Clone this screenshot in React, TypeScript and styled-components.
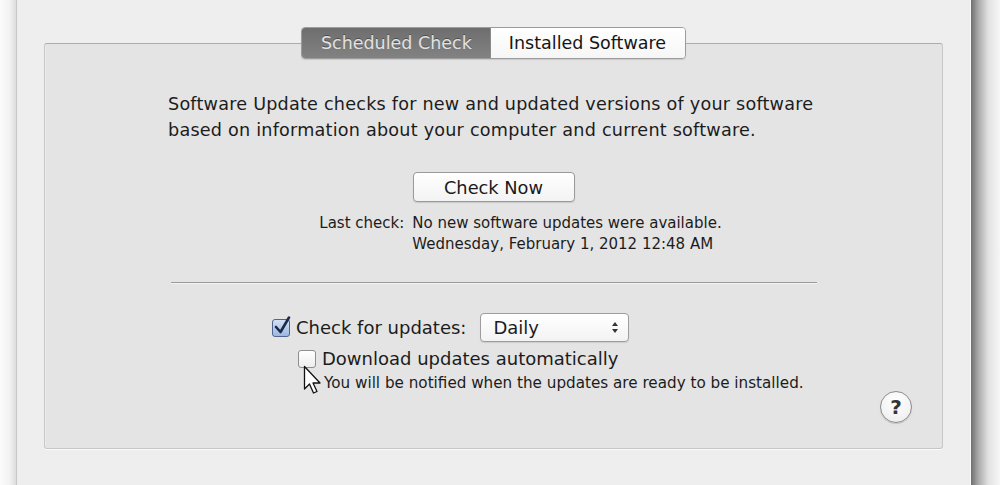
import React from "react";
import styled, { createGlobalStyle } from "styled-components";

const GlobalStyle = createGlobalStyle`
  html, body {
    margin: 0;
    padding: 0;
    background: #eeeeee;
  }
  body {
    font-family: "DejaVu Sans", "Liberation Sans", sans-serif;
    color: #1c1c1c;
  }
`;

const Screen = styled.div`
  display: flex;
  width: 1000px;
  height: 485px;
  overflow: hidden;
`;

const LeftEdge = styled.div`
  width: 16px;
  flex-shrink: 0;
  background: linear-gradient(to right, #fbfbfb, #f2f2f2 60%, #dcdcdc);
  border-right: 1px solid #c8c8c8;
`;

const RightShadow = styled.div`
  width: 29px;
  flex-shrink: 0;
  border-left: 1px solid #fafafa;
  background: linear-gradient(to right, #6f6f6f, #a9a9a9 25%, #e2e2e2 60%, #f6f6f6);
`;

const Window = styled.div`
  flex: 1;
  background: #eeeeee;
  padding: 43px 27px 0 27px;
`;

const Panel = styled.section`
  height: 406px;
  box-sizing: border-box;
  background: #e4e4e4;
  border: 1px solid #c6c6c6;
  border-top-color: #acacac;
  border-radius: 3px;
  box-shadow: 0 1px 0 #fafafa, inset 1px 0 0 #ececec;
  display: flex;
  flex-direction: column;
  align-items: center;
  position: relative;
`;

const TabBar = styled.div`
  display: flex;
  margin-top: -17px;
  height: 30px;
  border: 1px solid #9c9c9c;
  border-radius: 4px;
  overflow: hidden;
  box-shadow: 0 1px 1px rgba(0, 0, 0, 0.12);
`;

const Tab = styled.div<{ $active?: boolean }>`
  display: flex;
  align-items: center;
  padding: 0 ${(p) => (p.$active ? "18px" : "19px")} 0 ${(p) => (p.$active ? "19px" : "18px")};
  font-size: 17.5px;
  color: ${(p) => (p.$active ? "#e2e2e2" : "#151515")};
  text-shadow: ${(p) => (p.$active ? "0 -1px 0 rgba(0,0,0,0.35)" : "none")};
  background: ${(p) =>
    p.$active
      ? "linear-gradient(to bottom, #6e6e6e, #828282)"
      : "linear-gradient(to bottom, #ffffff, #f6f6f6)"};
  & + & {
    border-left: 1px solid #8a8a8a;
  }
`;

const Description = styled.p`
  margin: 32px 0 0 0;
  font-size: 17.6px;
  letter-spacing: 0.22px;
  line-height: 26px;
  width: 656px;
  padding-left: 5px;
`;

const PushButton = styled.button`
  margin-top: 29px;
  width: 162px;
  height: 30px;
  border: 1px solid #9a9a9a;
  border-radius: 4px;
  background: linear-gradient(to bottom, #ffffff, #f3f3f3);
  box-shadow: 0 1px 1px rgba(0, 0, 0, 0.12);
  font-family: inherit;
  font-size: 17.8px;
  color: #1a1a1a;
  padding: 0;
`;

const LastCheck = styled.div`
  margin-top: 11px;
  display: grid;
  grid-template-columns: auto auto;
  column-gap: 8px;
  font-size: 15px;
  line-height: 21px;
  margin-left: 54px;
`;

const LastLabel = styled.span`
  text-align: right;
`;

const Divider = styled.hr`
  margin: 27px 0 0 0;
  width: 646px;
  border: none;
  border-top: 1px solid #9a9a9a;
  border-bottom: 1px solid #f2f2f2;
`;

const Options = styled.div`
  align-self: flex-start;
  margin-top: 29px;
  margin-left: 227px;
  display: flex;
  flex-direction: column;
  position: relative;
`;

const Row = styled.div<{ $indent?: number }>`
  display: flex;
  align-items: center;
  gap: 6px;
  padding-left: ${(p) => p.$indent || 0}px;
`;

const Box = styled.span<{ $checked?: boolean }>`
  width: 18px;
  height: 18px;
  flex-shrink: 0;
  box-sizing: border-box;
  border: 1px solid ${(p) => (p.$checked ? "#4f6390" : "#8f8f8f")};
  border-radius: 3px;
  background: ${(p) =>
    p.$checked
      ? "linear-gradient(to bottom, #d3e1f5, #9cb8e0)"
      : "linear-gradient(to bottom, #ffffff, #ededed)"};
  position: relative;
  svg {
    position: absolute;
    left: 1px;
    top: -4px;
  }
`;

const OptionLabel = styled.span`
  font-size: 18px;
`;

const Select = styled.div`
  margin-left: 8px;
  width: 149px;
  height: 29px;
  box-sizing: border-box;
  border: 1px solid #9d9d9d;
  border-radius: 4px;
  background: linear-gradient(to bottom, #ffffff, #f3f3f3);
  box-shadow: 0 1px 1px rgba(0, 0, 0, 0.1);
  display: flex;
  align-items: center;
  justify-content: space-between;
  padding: 0 9px 0 12px;
  font-size: 18px;
`;

const Note = styled.div`
  margin-top: 5px;
  padding-left: 52px;
  font-size: 15.2px;
`;

const Cursor = styled.svg`
  position: absolute;
  left: 31px;
  top: 52px;
`;

const HelpButton = styled.button`
  position: absolute;
  right: 30px;
  bottom: 25px;
  width: 32px;
  height: 32px;
  border-radius: 50%;
  border: 1px solid #8c8c8c;
  background: radial-gradient(circle at 50% 30%, #ffffff, #ececec);
  box-shadow: 0 1px 1px rgba(0, 0, 0, 0.15);
  font-family: inherit;
  font-size: 20px;
  font-weight: bold;
  color: #333333;
  padding: 0;
  line-height: 30px;
`;

const Check = () => (
  <svg width="18" height="20" viewBox="0 0 18 20">
    <path
      d="M2 11 L6.5 16 L15 1.5"
      fill="none"
      stroke="#1d2a4a"
      strokeWidth="2.6"
      strokeLinecap="round"
      strokeLinejoin="round"
    />
  </svg>
);

const Arrows = () => (
  <svg width="8" height="13" viewBox="0 0 8 13">
    <path d="M4 1 L7 5 H1 Z" fill="#333" />
    <path d="M4 12 L7 8 H1 Z" fill="#333" />
  </svg>
);

export default function App() {
  return (
    <Screen>
      <GlobalStyle />
      <LeftEdge />
      <Window>
        <Panel>
          <TabBar>
            <Tab $active>Scheduled Check</Tab>
            <Tab>Installed Software</Tab>
          </TabBar>
          <Description>
            Software Update checks for new and updated versions of your software
            based on information about your computer and current software.
          </Description>
          <PushButton>Check Now</PushButton>
          <LastCheck>
            <LastLabel>Last check:</LastLabel>
            <span>No new software updates were available.</span>
            <span />
            <span>Wednesday, February 1, 2012 12:48 AM</span>
          </LastCheck>
          <Divider />
          <Options>
            <Row>
              <Box $checked>
                <Check />
              </Box>
              <OptionLabel>Check for updates:</OptionLabel>
              <Select>
                <span>Daily</span>
                <Arrows />
              </Select>
            </Row>
            <Row $indent={26} style={{ marginTop: 6 }}>
              <Box />
              <OptionLabel>Download updates automatically</OptionLabel>
            </Row>
            <Note>You will be notified when the updates are ready to be installed.</Note>
            <Cursor width="20" height="30" viewBox="0 0 20 30">
              <path
                d="M1.5 1.5 L1.5 24 L6.5 19 L10.5 28 L14 26.5 L10 18 L17 18 Z"
                fill="#ffffff"
                stroke="#111111"
                strokeWidth="1.3"
                strokeLinejoin="round"
              />
            </Cursor>
          </Options>
          <HelpButton>?</HelpButton>
        </Panel>
      </Window>
      <RightShadow />
    </Screen>
  );
}
